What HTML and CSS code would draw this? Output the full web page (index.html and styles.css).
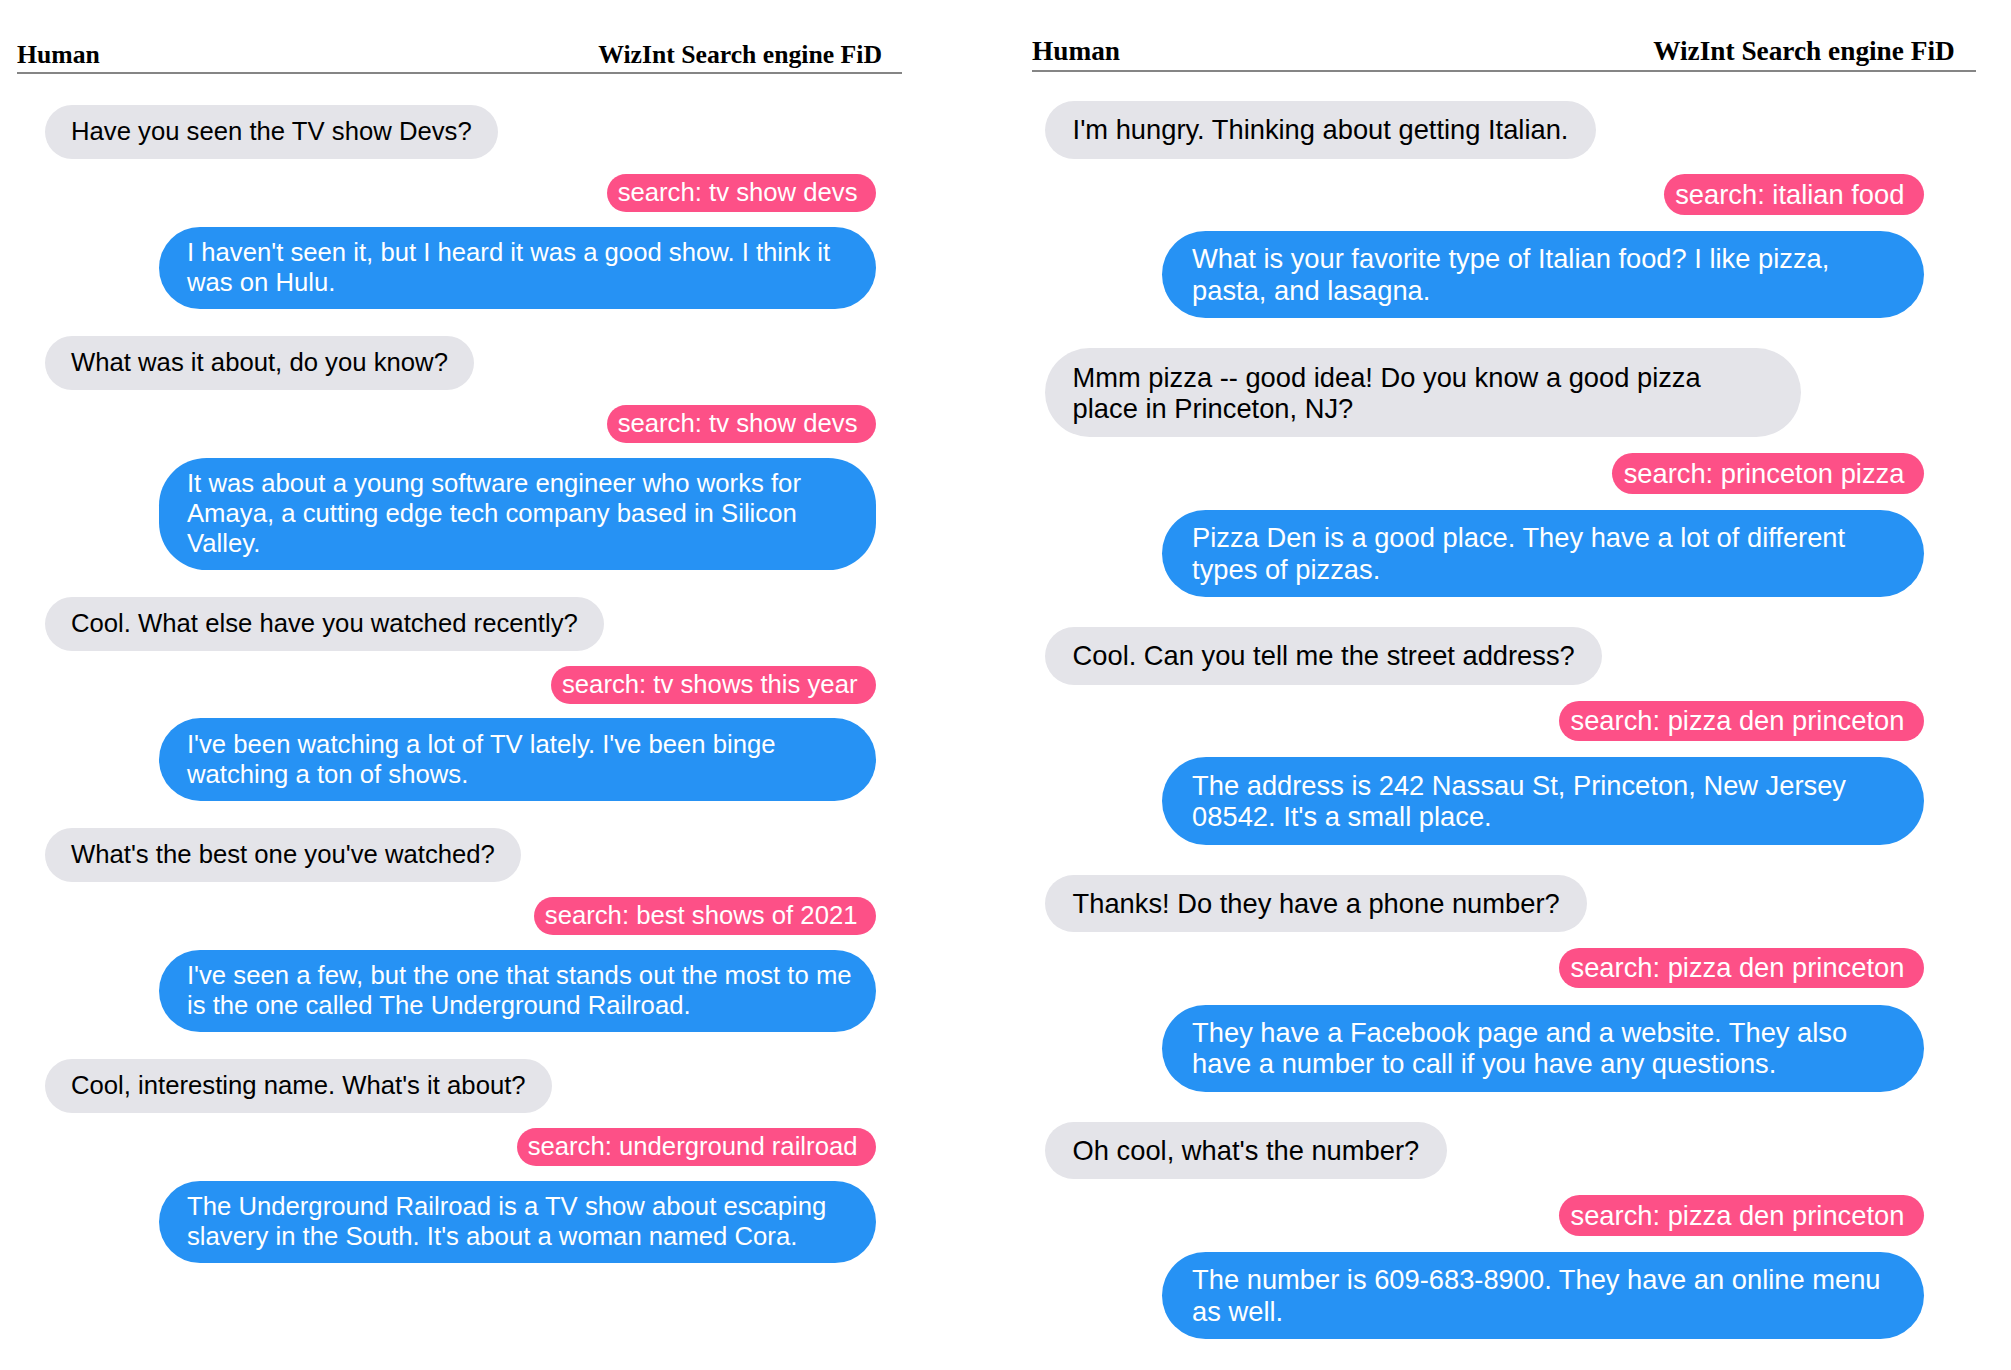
FILE: index.html
```html
<!DOCTYPE html>
<html lang="en">
<head>
<meta charset="utf-8">
<title>WizInt Search engine FiD dialogues</title>
<link rel="stylesheet" href="styles.css">
</head>
<body>
<div class="page">
  <section class="panel panel-left">
    <div class="head">
      <span>Human</span>
      <span>WizInt Search engine FiD</span>
    </div>
    <div class="chat">
      <div class="msg human">Have you seen the TV show Devs?</div>
      <div class="msg search">search: tv show devs</div>
      <div class="msg bot">I haven't seen it, but I heard it was a good show. I think it<br>was on Hulu.</div>

      <div class="msg human">What was it about, do you know?</div>
      <div class="msg search">search: tv show devs</div>
      <div class="msg bot">It was about a young software engineer who works for<br>Amaya, a cutting edge tech company based in Silicon<br>Valley.</div>

      <div class="msg human">Cool. What else have you watched recently?</div>
      <div class="msg search">search: tv shows this year</div>
      <div class="msg bot">I've been watching a lot of TV lately. I've been binge<br>watching a ton of shows.</div>

      <div class="msg human">What's the best one you've watched?</div>
      <div class="msg search">search: best shows of 2021</div>
      <div class="msg bot">I've seen a few, but the one that stands out the most to me<br>is the one called The Underground Railroad.</div>

      <div class="msg human">Cool, interesting name. What's it about?</div>
      <div class="msg search">search: underground railroad</div>
      <div class="msg bot">The Underground Railroad is a TV show about escaping<br>slavery in the South. It's about a woman named Cora.</div>
    </div>
  </section>

  <section class="panel panel-right">
    <div class="head">
      <span>Human</span>
      <span>WizInt Search engine FiD</span>
    </div>
    <div class="chat">
      <div class="msg human">I'm hungry. Thinking about getting Italian.</div>
      <div class="msg search">search: italian food</div>
      <div class="msg bot">What is your favorite type of Italian food? I like pizza,<br>pasta, and lasagna.</div>

      <div class="msg human human-wide">Mmm pizza -- good idea! Do you know a good pizza<br>place in Princeton, NJ?</div>
      <div class="msg search">search: princeton pizza</div>
      <div class="msg bot">Pizza Den is a good place. They have a lot of different<br>types of pizzas.</div>

      <div class="msg human">Cool. Can you tell me the street address?</div>
      <div class="msg search">search: pizza den princeton</div>
      <div class="msg bot">The address is 242 Nassau St, Princeton, New Jersey<br>08542. It's a small place.</div>

      <div class="msg human">Thanks! Do they have a phone number?</div>
      <div class="msg search">search: pizza den princeton</div>
      <div class="msg bot">They have a Facebook page and a website. They also<br>have a number to call if you have any questions.</div>

      <div class="msg human">Oh cool, what's the number?</div>
      <div class="msg search">search: pizza den princeton</div>
      <div class="msg bot">The number is 609-683-8900. They have an online menu<br>as well.</div>
    </div>
  </section>
</div>
</body>
</html>
```

FILE: styles.css
```css
html, body {
  margin: 0;
  padding: 0;
  background: #ffffff;
}

.page {
  display: flex;
  align-items: flex-start;
  gap: 130px;
  padding-left: 17px;
}

.panel {
  display: flex;
  flex-direction: column;
}

.panel-left {
  font-size: 25.7px;
  width: 885px;
  padding-top: 39.5px;
}

.panel-right {
  font-size: 27.3px;
  width: 944px;
  padding-top: 36px;
}

.head {
  display: flex;
  justify-content: space-between;
  font-family: "Liberation Serif", "Times New Roman", serif;
  font-weight: bold;
  line-height: 1.15;
  color: #000;
  padding: 0 0.78em 0.1em 0;
  border-bottom: 2px solid #858585;
}

.chat {
  display: flex;
  flex-direction: column;
  font-family: "Liberation Sans", Arial, Helvetica, sans-serif;
  line-height: 1.15;
}

.panel-left .chat {
  margin: 31.4px 0 0 28px;
  width: 831px;
}

.panel-right .chat {
  margin: 29px 0 0 13px;
  width: 879px;
}

.msg {
  white-space: nowrap;
  box-sizing: border-box;
}

.human {
  align-self: flex-start;
  background: #e4e4e9;
  color: #000;
  padding: 0.477em 1.01em;
  border-radius: 1.85em;
  margin-bottom: 0.58em;
}

.human-wide {
  width: 27.7em;
}

.search {
  align-self: flex-end;
  background: #fd5087;
  color: #fff;
  padding: 0.165em 0.72em 0.165em 0.41em;
  border-radius: 0.8em;
  margin-bottom: 0.6em;
}

.panel-left .search {
  margin-bottom: 0.58em;
}

.bot {
  align-self: flex-end;
  width: 27.9em;
  background: #2692f4;
  color: #fff;
  padding: 0.45em 1.09em;
  border-radius: 1.85em;
  margin-bottom: 1.1em;
}

.panel-left .bot {
  margin-bottom: 1.05em;
}
```
